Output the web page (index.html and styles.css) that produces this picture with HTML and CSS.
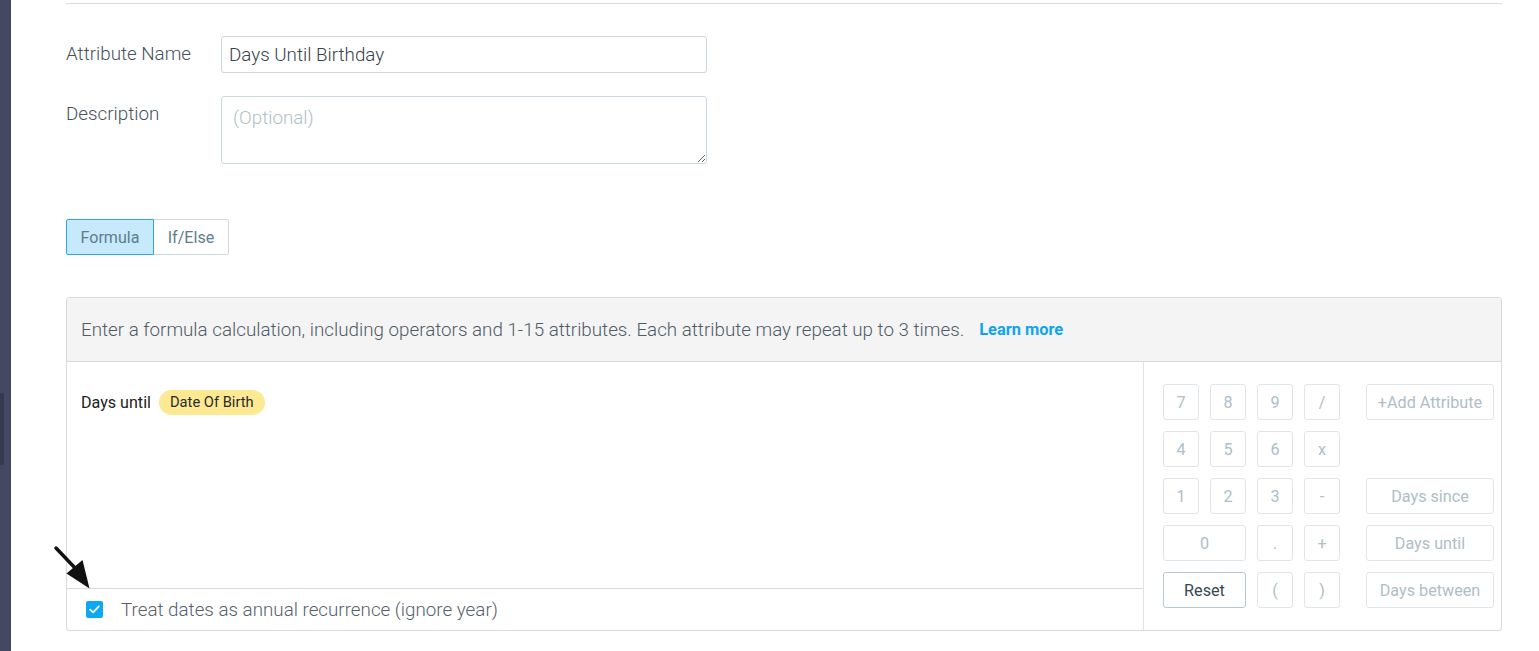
FILE: index.html
```html
<!DOCTYPE html>
<html lang="en">
<head>
    <meta charset="UTF-8">
    <meta name="viewport" content="width=device-width, initial-scale=1.0">
    <title>Custom Attribute</title>
    <link rel="stylesheet" href="styles.css">
</head>
<body>
    <div class="page">
        <div class="side-nav">
            <div class="side-tab"></div>
        </div>

        <div class="main">
            <div class="form-section">
                <div class="form-row">
                    <label class="form-label" for="attr-name">Attribute Name</label>
                    <input class="form-input" id="attr-name" type="text" value="Days Until Birthday">
                </div>
                <div class="form-row">
                    <label class="form-label" for="attr-desc">Description</label>
                    <textarea class="form-textarea" id="attr-desc" placeholder="(Optional)"></textarea>
                </div>

                <div class="mode-toggle">
                    <button class="mode-btn active">Formula</button>
                    <button class="mode-btn">If/Else</button>
                </div>

                <div class="formula-panel">
                    <div class="formula-header">
                        Enter a formula calculation, including operators and 1-15 attributes. Each attribute may repeat up to 3 times.
                        <a class="learn-more" href="#">Learn more</a>
                    </div>

                    <div class="formula-body">
                        <div class="formula-editor">
                            <div class="formula-expr">
                                <span class="expr-text">Days until</span>
                                <span class="attr-pill">Date Of Birth</span>
                            </div>
                            <label class="recurrence">
                                <span class="check-box">
                                    <svg width="11" height="9" viewBox="0 0 11 9"><path d="M1.2 4.6 L4.1 7.3 L9.8 1.4" fill="none" stroke="#fff" stroke-width="1.8" stroke-linecap="round" stroke-linejoin="round"/></svg>
                                </span>
                                Treat dates as annual recurrence (ignore year)
                            </label>
                        </div>

                        <div class="keypad">
                            <button class="key">7</button>
                            <button class="key">8</button>
                            <button class="key">9</button>
                            <button class="key">/</button>
                            <button class="key wide">+Add Attribute</button>

                            <button class="key">4</button>
                            <button class="key">5</button>
                            <button class="key">6</button>
                            <button class="key">x</button>
                            <span></span>

                            <button class="key">1</button>
                            <button class="key">2</button>
                            <button class="key">3</button>
                            <button class="key">-</button>
                            <button class="key wide">Days since</button>

                            <button class="key span-2">0</button>
                            <button class="key">.</button>
                            <button class="key">+</button>
                            <button class="key wide">Days until</button>

                            <button class="key span-2 reset">Reset</button>
                            <button class="key">(</button>
                            <button class="key">)</button>
                            <button class="key wide">Days between</button>
                        </div>
                    </div>
                </div>
            </div>
        </div>
    </div>

    <!-- pointer callout -->
    <svg class="callout" width="100" height="100" viewBox="45 540 100 100">
        <line x1="56" y1="548" x2="76" y2="569" stroke="#111" stroke-width="3.5" stroke-linecap="round"/>
        <polygon points="66.5,573.5 82.5,560 89.5,588.5" fill="#111"/>
    </svg>
</body>
</html>
```

FILE: styles.css
```css
body {
    margin: 0;
    font-family: Roboto, "Liberation Sans", sans-serif;
    background: #fff;
}

.page {
    display: flex;
    min-height: 100vh;
}

.side-nav {
    width: 11px;
    flex: none;
    background: #454863;
}

.side-tab {
    width: 4px;
    height: 72px;
    margin-top: 393px;
    background: #363a50;
    border-radius: 0 2px 2px 0;
}

.main {
    flex: 1;
    padding: 3px 37px 0 55px;
}

.form-section {
    border-top: 1px solid #d9d9d9;
    padding-top: 32px;
}

.form-row {
    display: flex;
    margin-bottom: 23px;
}

.form-label {
    width: 155px;
    flex: none;
    line-height: 37px;
    font-size: 18.8px;
    font-weight: 300;
    color: #46515b;
}

.form-input,
.form-textarea {
    box-sizing: border-box;
    width: 486px;
    border: 1px solid #ccd7de;
    border-radius: 3px;
    font-family: inherit;
    font-size: 18.8px;
    font-weight: 300;
    color: #37424c;
    outline: none;
}

.form-input {
    height: 37px;
    padding: 1px 7px 0;
}

.form-textarea {
    height: 68px;
    padding: 10px 11px;
    resize: vertical;
}

.form-textarea::placeholder {
    color: #b0bec5;
}

.mode-toggle {
    display: flex;
    margin-top: 55px;
}

.mode-btn {
    height: 36px;
    padding: 0;
    border: 1px solid #cfd8dc;
    background: #fff;
    font-family: inherit;
    font-size: 16.1px;
    color: #607d8b;
    cursor: pointer;
}

.mode-btn:first-child {
    width: 88px;
    border-radius: 2px 0 0 2px;
}

.mode-btn:last-child {
    width: 76px;
    margin-left: -1px;
    border-radius: 0 2px 2px 0;
}

.mode-btn.active {
    background: #c6eafc;
    border-color: #2ba7ee;
    position: relative;
    z-index: 1;
}

.formula-panel {
    margin-top: 42px;
    border: 1px solid #d9d9d9;
    border-radius: 3px;
}

.formula-header {
    height: 63px;
    display: flex;
    align-items: center;
    padding-left: 14px;
    background: #f4f4f4;
    border-bottom: 1px solid #d9d9d9;
    font-size: 18.8px;
    font-weight: 300;
    color: #4f5b66;
}

.learn-more {
    margin-left: 15px;
    font-size: 16.4px;
    font-weight: 700;
    color: #0ea5f0;
    text-decoration: none;
}

.formula-body {
    display: flex;
}

.formula-editor {
    flex: 1;
    display: flex;
    flex-direction: column;
}

.formula-expr {
    flex: 1;
    display: flex;
    align-items: flex-start;
    gap: 8px;
    padding: 28px 14px;
}

.expr-text {
    line-height: 25px;
    font-size: 16.1px;
    color: #222;
}

.attr-pill {
    height: 25px;
    line-height: 25px;
    padding: 0 11px;
    border-radius: 13px;
    background: #fce992;
    font-size: 14.7px;
    color: #2b2b2b;
}

.recurrence {
    display: flex;
    align-items: center;
    gap: 18px;
    height: 41px;
    padding-left: 19px;
    border-top: 1px solid #d3dde2;
    font-size: 18.8px;
    font-weight: 300;
    color: #55616b;
}

.check-box {
    width: 17px;
    height: 17px;
    display: flex;
    align-items: center;
    justify-content: center;
    background: #0ba8f4;
    border-radius: 2px;
}

.keypad {
    flex: none;
    display: grid;
    grid-template-columns: repeat(4, 36px) 143px;
    grid-auto-rows: 36px;
    gap: 11px;
    padding: 22px 7px 22px 19px;
    border-left: 1px solid #dde2e5;
}

.key {
    border: 1px solid #dfe5e9;
    border-radius: 3px;
    background: #fff;
    font-family: inherit;
    font-size: 16.2px;
    color: #b0bec5;
    padding: 0;
    cursor: pointer;
}

.key.wide {
    width: 128px;
    justify-self: end;
}

.key.span-2 {
    grid-column: span 2;
}

.key.reset {
    border-color: #b9c8cf;
    color: #37474f;
}

.callout {
    position: absolute;
    left: 45px;
    top: 540px;
    pointer-events: none;
}
```
